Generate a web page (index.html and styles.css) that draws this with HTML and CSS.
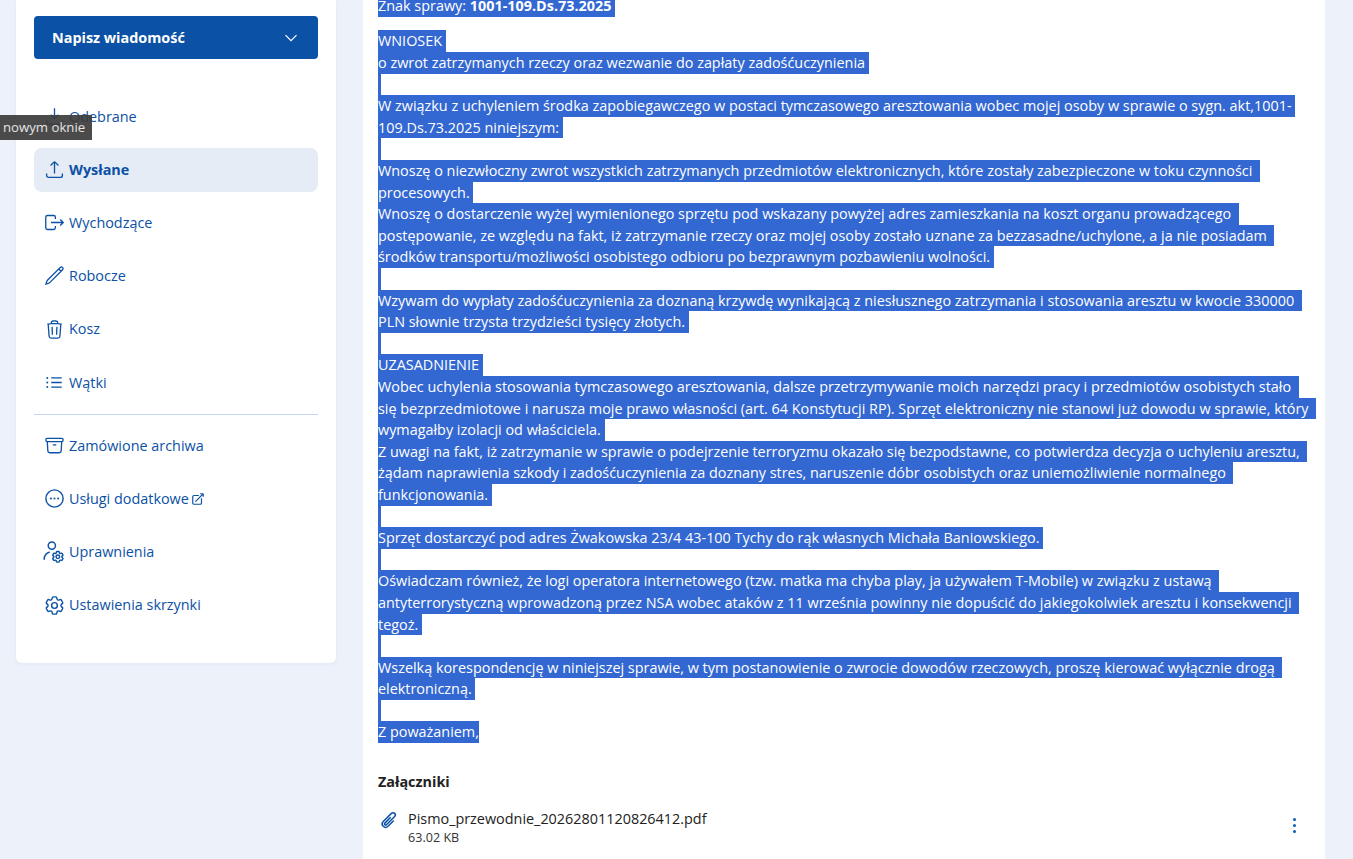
FILE: index.html
```html
<!DOCTYPE html>
<html lang="pl">
<head>
  <meta charset="UTF-8" />
  <title>Wysłane</title>
  <link rel="stylesheet" href="styles.css">
</head>
<body>
  <div class="tooltip">nowym oknie</div>

  <aside class="sidebar">
    <button class="compose">
      <span>Napisz wiadomość</span>
      <svg width="14" height="14" viewBox="0 0 14 14" fill="none" stroke="#fff" stroke-width="1.2"><path d="M1.5 4.2 7 9.7l5.5-5.5"/></svg>
    </button>

    <nav class="menu">
      <a class="item">
        <svg class="icon" viewBox="0 0 24 24"><path d="M3 16.5v2.25A2.25 2.25 0 0 0 5.25 21h13.5A2.25 2.25 0 0 0 21 18.75V16.5M16.5 10 12 14.500m0 0L7.5 10m4.500 4.500V2.500"/></svg>
        Odebrane
      </a>
      <a class="item active">
        <svg class="icon" viewBox="0 0 24 24"><path d="M3 16.5v2.25A2.25 2.25 0 0 0 5.25 21h13.5A2.25 2.25 0 0 0 21 18.75V16.5m-13.5-9L12 3m0 0 4.5 4.5M12 3v13.5"/></svg>
        Wysłane
      </a>
      <a class="item">
        <svg class="icon" viewBox="0 0 24 24"><path d="M13 8V6a2 2 0 0 0-2-2H4a2 2 0 0 0-2 2v12a2 2 0 0 0 2 2h7a2 2 0 0 0 2-2v-2M8 12h14m-3.500-3.500L22 12l-3.500 3.500"/></svg>
        Wychodzące
      </a>
      <a class="item">
        <svg class="icon" viewBox="0 0 24 24"><path d="m16.862 4.487 1.687-1.688a1.875 1.875 0 1 1 2.652 2.652L6.832 19.82a4.5 4.5 0 0 1-1.897 1.13l-2.685.8.8-2.685a4.5 4.5 0 0 1 1.13-1.897L16.863 4.487Zm0 0L19.5 7.125"/></svg>
        Robocze
      </a>
      <a class="item">
        <svg class="icon" viewBox="0 0 24 24"><path d="m14.74 9-.346 9m-4.788 0L9.26 9m9.968-3.21c.342.052.682.107 1.022.166m-1.022-.165L18.16 19.673a2.25 2.25 0 0 1-2.244 2.077H8.084a2.25 2.25 0 0 1-2.244-2.077L4.772 5.79m14.456 0a48.108 48.108 0 0 0-3.478-.397m-12 .562c.34-.059.68-.114 1.022-.165m0 0a48.11 48.11 0 0 1 3.478-.397m7.5 0v-.916c0-1.18-.91-2.164-2.09-2.201a51.964 51.964 0 0 0-3.32 0c-1.18.037-2.09 1.022-2.09 2.201v.916m7.5 0a48.667 48.667 0 0 0-7.5 0"/></svg>
        Kosz
      </a>
      <a class="item">
        <svg class="icon" viewBox="0 0 24 24"><path d="M8.25 6.75h12M8.25 12h12m-12 5.25h12M3.75 6.75h.007v.008H3.75V6.75Zm.375 0a.375.375 0 1 1-.75 0 .375.375 0 0 1 .75 0ZM3.75 12h.007v.008H3.75V12Zm.375 0a.375.375 0 1 1-.75 0 .375.375 0 0 1 .75 0Zm-.375 5.25h.007v.008H3.75v-.008Zm.375 0a.375.375 0 1 1-.75 0 .375.375 0 0 1 .75 0Z"/></svg>
        Wątki
      </a>

      <hr class="divider" />

      <a class="item">
        <svg class="icon" viewBox="0 0 24 24"><path d="m20.25 7.5-.625 10.632a2.25 2.25 0 0 1-2.247 2.118H6.622a2.25 2.25 0 0 1-2.247-2.118L3.75 7.5M10 11.25h4M3.375 7.5h17.25c.621 0 1.125-.504 1.125-1.125v-1.5c0-.621-.504-1.125-1.125-1.125H3.375c-.621 0-1.125.504-1.125 1.125v1.5c0 .621.504 1.125 1.125 1.125Z"/></svg>
        Zamówione archiwa
      </a>
      <a class="item">
        <svg class="icon big" viewBox="0 0 24 24"><path d="M8.625 12a.375.375 0 1 1-.75 0 .375.375 0 0 1 .75 0Zm0 0H8.25m4.125 0a.375.375 0 1 1-.75 0 .375.375 0 0 1 .75 0Zm0 0H12m4.125 0a.375.375 0 1 1-.75 0 .375.375 0 0 1 .75 0Zm0 0h-.375M21 12a9 9 0 1 1-18 0 9 9 0 0 1 18 0Z"/></svg>
        <span>Usługi dodatkowe</span>
        <svg class="icon-small" viewBox="0 0 24 24"><path d="M13.5 6H5.25A2.25 2.25 0 0 0 3 8.25v10.5A2.25 2.25 0 0 0 5.25 21h10.5A2.25 2.25 0 0 0 18 18.75V10.5m-10.5 6L21 3m0 0h-5.25M21 3v5.25"/></svg>
      </a>
      <a class="item">
        <svg class="icon big" viewBox="0 0 24 24">
          <circle cx="9.200" cy="4.800" r="3.800"/>
          <path d="M1.200 19.500c0-3.800 2.200-7 5.800-8"/>
          <g transform="translate(15.500 16.500) scale(.62) translate(-12 -12)" stroke-width="2.400">
            <path d="M9.594 3.940c.090-.542.560-.940 1.110-.940h2.593c.550 0 1.020.398 1.110.940l.213 1.281c.063.374.313.686.645.870.074.040.147.083.220.127.325.196.720.257 1.075.124l1.217-.456a1.125 1.125 0 0 1 1.370.490l1.296 2.247a1.125 1.125 0 0 1-.260 1.431l-1.003.827c-.293.241-.438.613-.430.992a7.723 7.723 0 0 1 0 .255c-.008.378.137.750.430.991l1.004.827c.424.350.534.955.260 1.430l-1.298 2.247a1.125 1.125 0 0 1-1.369.491l-1.217-.456c-.355-.133-.750-.072-1.076.124a6.470 6.470 0 0 1-.220.128c-.331.183-.581.495-.644.869l-.213 1.281c-.090.543-.560.940-1.110.940h-2.594c-.550 0-1.019-.398-1.110-.940l-.213-1.281c-.062-.374-.312-.686-.644-.870a6.520 6.520 0 0 1-.220-.127c-.325-.196-.720-.257-1.076-.124l-1.217.456a1.125 1.125 0 0 1-1.369-.490l-1.297-2.247a1.125 1.125 0 0 1 .260-1.431l1.004-.827c.292-.240.437-.613.430-.991a6.932 6.932 0 0 1 0-.255c.007-.380-.138-.751-.430-.992l-1.004-.827a1.125 1.125 0 0 1-.260-1.430l1.297-2.247a1.125 1.125 0 0 1 1.370-.491l1.216.456c.356.133.751.072 1.076-.124.072-.044.146-.086.220-.128.332-.183.582-.495.644-.869l.214-1.280ZM15 12a3 3 0 1 1-6 0 3 3 0 0 1 6 0Z"/>
          </g>
        </svg>
        Uprawnienia
      </a>
      <a class="item">
        <svg class="icon big" viewBox="0 0 24 24"><path d="M9.594 3.940c.090-.542.560-.940 1.110-.940h2.593c.550 0 1.020.398 1.110.940l.213 1.281c.063.374.313.686.645.870.074.040.147.083.220.127.325.196.720.257 1.075.124l1.217-.456a1.125 1.125 0 0 1 1.370.490l1.296 2.247a1.125 1.125 0 0 1-.260 1.431l-1.003.827c-.293.241-.438.613-.430.992a7.723 7.723 0 0 1 0 .255c-.008.378.137.750.430.991l1.004.827c.424.350.534.955.260 1.430l-1.298 2.247a1.125 1.125 0 0 1-1.369.491l-1.217-.456c-.355-.133-.750-.072-1.076.124a6.470 6.470 0 0 1-.220.128c-.331.183-.581.495-.644.869l-.213 1.281c-.090.543-.560.940-1.110.940h-2.594c-.550 0-1.019-.398-1.110-.940l-.213-1.281c-.062-.374-.312-.686-.644-.870a6.520 6.520 0 0 1-.220-.127c-.325-.196-.720-.257-1.076-.124l-1.217.456a1.125 1.125 0 0 1-1.369-.490l-1.297-2.247a1.125 1.125 0 0 1 .260-1.431l1.004-.827c.292-.240.437-.613.430-.991a6.932 6.932 0 0 1 0-.255c.007-.380-.138-.751-.430-.992l-1.004-.827a1.125 1.125 0 0 1-.260-1.430l1.297-2.247a1.125 1.125 0 0 1 1.370-.491l1.216.456c.356.133.751.072 1.076-.124.072-.044.146-.086.220-.128.332-.183.582-.495.644-.869l.214-1.280ZM15 12a3 3 0 1 1-6 0 3 3 0 0 1 6 0Z"/></svg>
        Ustawienia skrzynki
      </a>
    </nav>
  </aside>

  <main class="message">
    <div class="selected case-no"><span class="ln">Znak sprawy: <b>1001-109.Ds.73.2025</b> </span></div>

    <div class="selected">
      <span class="ln">WNIOSEK </span>
      <span class="ln">o zwrot zatrzymanych rzeczy oraz wezwanie do zapłaty zadośćuczynienia </span>
      <span class="ln blank"></span>
      <span class="ln">W związku z uchyleniem środka zapobiegawczego w postaci tymczasowego aresztowania wobec mojej osoby w sprawie o sygn. akt,1001- </span>
      <span class="ln">109.Ds.73.2025 niniejszym: </span>
      <span class="ln blank"></span>
      <span class="ln">Wnoszę o niezwłoczny zwrot wszystkich zatrzymanych przedmiotów elektronicznych, które zostały zabezpieczone w toku czynności  </span>
      <span class="ln">procesowych. </span>
      <span class="ln">Wnoszę o dostarczenie wyżej wymienionego sprzętu pod wskazany powyżej adres zamieszkania na koszt organu prowadzącego  </span>
      <span class="ln">postępowanie, ze względu na fakt, iż zatrzymanie rzeczy oraz mojej osoby zostało uznane za bezzasadne/uchylone, a ja nie posiadam  </span>
      <span class="ln">środków transportu/możliwości osobistego odbioru po bezprawnym pozbawieniu wolności. </span>
      <span class="ln blank"></span>
      <span class="ln">Wzywam do wypłaty zadośćuczynienia za doznaną krzywdę wynikającą z niesłusznego zatrzymania i stosowania aresztu w kwocie 330000  </span>
      <span class="ln">PLN słownie trzysta trzydzieści tysięcy złotych. </span>
      <span class="ln blank"></span>
      <span class="ln">UZASADNIENIE </span>
      <span class="ln">Wobec uchylenia stosowania tymczasowego aresztowania, dalsze przetrzymywanie moich narzędzi pracy i przedmiotów osobistych stało  </span>
      <span class="ln">się bezprzedmiotowe i narusza moje prawo własności (art. 64 Konstytucji RP). Sprzęt elektroniczny nie stanowi już dowodu w sprawie, który  </span>
      <span class="ln">wymagałby izolacji od właściciela. </span>
      <span class="ln">Z uwagi na fakt, iż zatrzymanie w sprawie o podejrzenie terroryzmu okazało się bezpodstawne, co potwierdza decyzja o uchyleniu aresztu,  </span>
      <span class="ln">żądam naprawienia szkody i zadośćuczynienia za doznany stres, naruszenie dóbr osobistych oraz uniemożliwienie normalnego  </span>
      <span class="ln">funkcjonowania. </span>
      <span class="ln blank"></span>
      <span class="ln">Sprzęt dostarczyć pod adres Żwakowska 23/4 43-100 Tychy do rąk własnych Michała Baniowskiego. </span>
      <span class="ln blank"></span>
      <span class="ln">Oświadczam również, że logi operatora internetowego (tzw. matka ma chyba play, ja używałem T-Mobile) w związku z ustawą  </span>
      <span class="ln">antyterrorystyczną wprowadzoną przez NSA wobec ataków z 11 września powinny nie dopuścić do jakiegokolwiek aresztu i konsekwencji  </span>
      <span class="ln">tegoż. </span>
      <span class="ln blank"></span>
      <span class="ln">Wszelką korespondencję w niniejszej sprawie, w tym postanowienie o zwrocie dowodów rzeczowych, proszę kierować wyłącznie drogą  </span>
      <span class="ln">elektroniczną. </span>
      <span class="ln blank"></span>
      <span class="ln">Z poważaniem,</span>
    </div>

    <h3 class="att-title">Załączniki</h3>
    <div class="attachment">
      <svg class="clip" viewBox="0 0 24 24"><path d="m18.375 12.739-7.693 7.693a4.500 4.500 0 0 1-6.364-6.364l10.940-10.940A3 3 0 1 1 19.500 7.372L8.552 18.320m.009-.010-.010.010m5.699-9.941-7.810 7.810a1.500 1.500 0 0 0 2.112 2.130"/></svg>
      <div class="att-info">
        <div class="att-name">Pismo_przewodnie_20262801120826412.pdf</div>
        <div class="att-size">63.02 KB</div>
      </div>
      <div class="kebab"><i></i><i></i><i></i></div>
    </div>
  </main>
</body>
</html>
```

FILE: styles.css
```css
html, body {
  height: 859px;
  overflow: hidden;
}

body {
  margin: 0;
  padding-left: 16px;
  display: flex;
  align-items: flex-start;
  gap: 27px;
  background: #edf2fa;
  color: #222;
  font-family: "Open Sans", sans-serif;
  font-size: 14.4px;
  line-height: 21.6px;
}

.tooltip {
  position: absolute;
  left: 0;
  top: 115px;
  height: 25px;
  padding: 0 7px 0 3px;
  background: rgba(60, 60, 60, 0.92);
  color: #e4e4e4;
  font-size: 13.2px;
  line-height: 25px;
}

.sidebar {
  width: 320px;
  height: 663px;
  flex: none;
  box-sizing: border-box;
  padding: 16px 18px 0;
  background: #fff;
  border-radius: 0 0 6px 6px;
  box-shadow: 0 1px 4px rgba(30, 60, 110, 0.06);
}

.compose {
  width: 100%;
  height: 43px;
  padding: 0 20px 0 18px;
  display: flex;
  align-items: center;
  justify-content: space-between;
  background: #0b51a5;
  color: #fff;
  border: none;
  border-radius: 4px;
  font-family: inherit;
  font-size: 14.4px;
  font-weight: 700;
}

.menu {
  margin-top: 35.4px;
  display: flex;
  flex-direction: column;
  gap: 9.2px;
}

.item {
  height: 44px;
  padding-left: 9.5px;
  display: flex;
  align-items: center;
  gap: 4.5px;
  border-radius: 8px;
  color: #0b51a5;
}

.item.active {
  background: #e5ecf5;
  font-weight: 700;
}

.icon {
  width: 21px;
  height: 21px;
  flex: none;
  fill: none;
  stroke: #0b51a5;
  stroke-width: 1.5;
}

.icon.big {
  width: 23px;
  height: 23px;
  margin: 0 -1px;
}

.icon-small {
  width: 14px;
  height: 14px;
  margin-left: -2.5px;
  fill: none;
  stroke: #0b51a5;
  stroke-width: 2;
}

.divider {
  width: 100%;
  margin: 0;
  border: none;
  border-top: 1px solid #c5d9f3;
}

.message {
  width: 962px;
  height: 859px;
  flex: none;
  box-sizing: border-box;
  padding-left: 15px;
  padding-right: 23px;
  background: #fff;
}

.selected {
  margin-bottom: 13.9px;
}

.case-no {
  margin-top: -5px;
}

.ln {
  display: block;
  width: fit-content;
  height: 21.6px;
  white-space: pre;
  background: #3367d1;
  color: #fff;
}

.ln.blank {
  width: 3px;
}

.att-title {
  margin: 27.5px 0 0;
  font-size: 14.4px;
  font-weight: 700;
  line-height: 21.6px;
}

.attachment {
  margin-top: 15.5px;
  display: flex;
  align-items: flex-start;
  gap: 10px;
}

.clip {
  width: 18px;
  height: 18px;
  margin: 3.5px 0 0 2px;
  flex: none;
  fill: none;
  stroke: #0b51a5;
  stroke-width: 2;
}

.att-info {
  flex: 1;
}

.att-size {
  font-size: 12.6px;
  line-height: 18px;
  color: #333;
}

.kebab {
  margin-top: 10px;
  margin-right: 6.5px;
  display: flex;
  flex-direction: column;
  gap: 3px;
}

.kebab i {
  width: 3px;
  height: 3px;
  background: #0b5cb5;
  border-radius: 50%;
}
```
